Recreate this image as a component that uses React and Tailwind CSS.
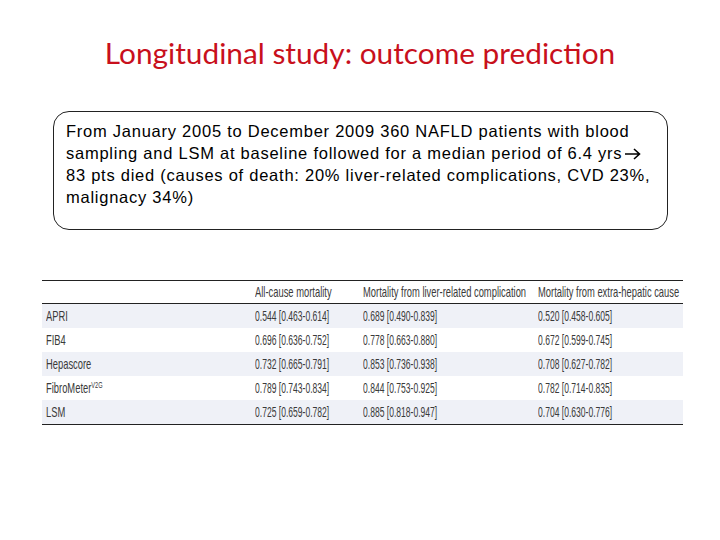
import React from "react";

const rows = [
  ["APRI", "0.544 [0.463-0.614]", "0.689 [0.490-0.839]", "0.520 [0.458-0.605]"],
  ["FIB4", "0.696 [0.636-0.752]", "0.778 [0.663-0.880]", "0.672 [0.599-0.745]"],
  ["Hepascore", "0.732 [0.665-0.791]", "0.853 [0.736-0.938]", "0.708 [0.627-0.782]"],
  ["FibroMeter", "0.789 [0.743-0.834]", "0.844 [0.753-0.925]", "0.782 [0.714-0.835]"],
  ["LSM", "0.725 [0.659-0.782]", "0.885 [0.818-0.947]", "0.704 [0.630-0.776]"],
];

function T({ children }) {
  return (
    <span className="inline-block origin-left scale-x-[0.625] whitespace-nowrap">{children}</span>
  );
}
function N({ children }) {
  return (
    <span className="inline-block origin-left scale-x-[0.57] whitespace-nowrap">{children}</span>
  );
}

function Arrow() {
  return (
    <svg width="17" height="12" viewBox="0 0 17 12" className="inline-block align-[-1px] ml-[2px]">
      <path d="M1 6 H15.5 M10 1 L15.5 6 L10 11" fill="none" stroke="#000" strokeWidth="1.6" />
    </svg>
  );
}

export default function App() {
  return (
    <div className="w-[720px] h-[540px] bg-white relative overflow-hidden">
      <div className="pt-[32px] h-[111px] flex justify-center">
        <h1 className="text-[29.8px] leading-[42px] text-[#c8101c] font-['Lato','Open_Sans',sans-serif]">
          Longitudinal study: outcome prediction
        </h1>
      </div>
      <div className="ml-[53px] w-[615px] h-[119px] border border-[#222] rounded-[16px] pl-[12px] pt-[8px] pr-[4px]">
        <p className="font-['Liberation_Sans',Arial,sans-serif] text-[16.5px] leading-[22px] text-black tracking-[0.75px] whitespace-nowrap">
          From January 2005 to December 2009 360 NAFLD patients with blood
          <br />
          sampling and LSM at baseline followed for a median period of 6.4 yrs
          <Arrow />
          <br />
          83 pts died (causes of death: 20% liver-related complications, CVD 23%,
          <br />
          malignacy 34%)
        </p>
      </div>
      <div className="ml-[42px] mt-[50px] w-[641px] border-t-[1.5px] border-b-[1.5px] border-[#222] font-['Liberation_Sans',Arial,sans-serif] text-[15px] text-[#3a3a3a]">
        <div className="grid grid-cols-[209px_108px_175px_149px] h-[23px] items-center border-b-[1.5px] border-[#222]">
          <div></div>
          <div className="pl-[4px]"><T>All-cause mortality</T></div>
          <div className="pl-[4px]"><T>Mortality from liver-related complication</T></div>
          <div className="pl-[4px]"><T>Mortality from extra-hepatic cause</T></div>
        </div>
        {rows.map((r, i) => (
          <div
            key={r[0]}
            className={
              "grid grid-cols-[209px_108px_175px_149px] h-[24px] items-center " +
              (i % 2 === 0 ? "bg-[#eff1f7]" : "bg-white")
            }
          >
            <div className="pl-[4px]">
              <T>
                {r[0]}
                {r[0] === "FibroMeter" && <sup className="text-[9px]">V2G</sup>}
              </T>
            </div>
            <div className="pl-[4px]"><N>{r[1]}</N></div>
            <div className="pl-[4px]"><N>{r[2]}</N></div>
            <div className="pl-[4px]"><N>{r[3]}</N></div>
          </div>
        ))}
      </div>
    </div>
  );
}
